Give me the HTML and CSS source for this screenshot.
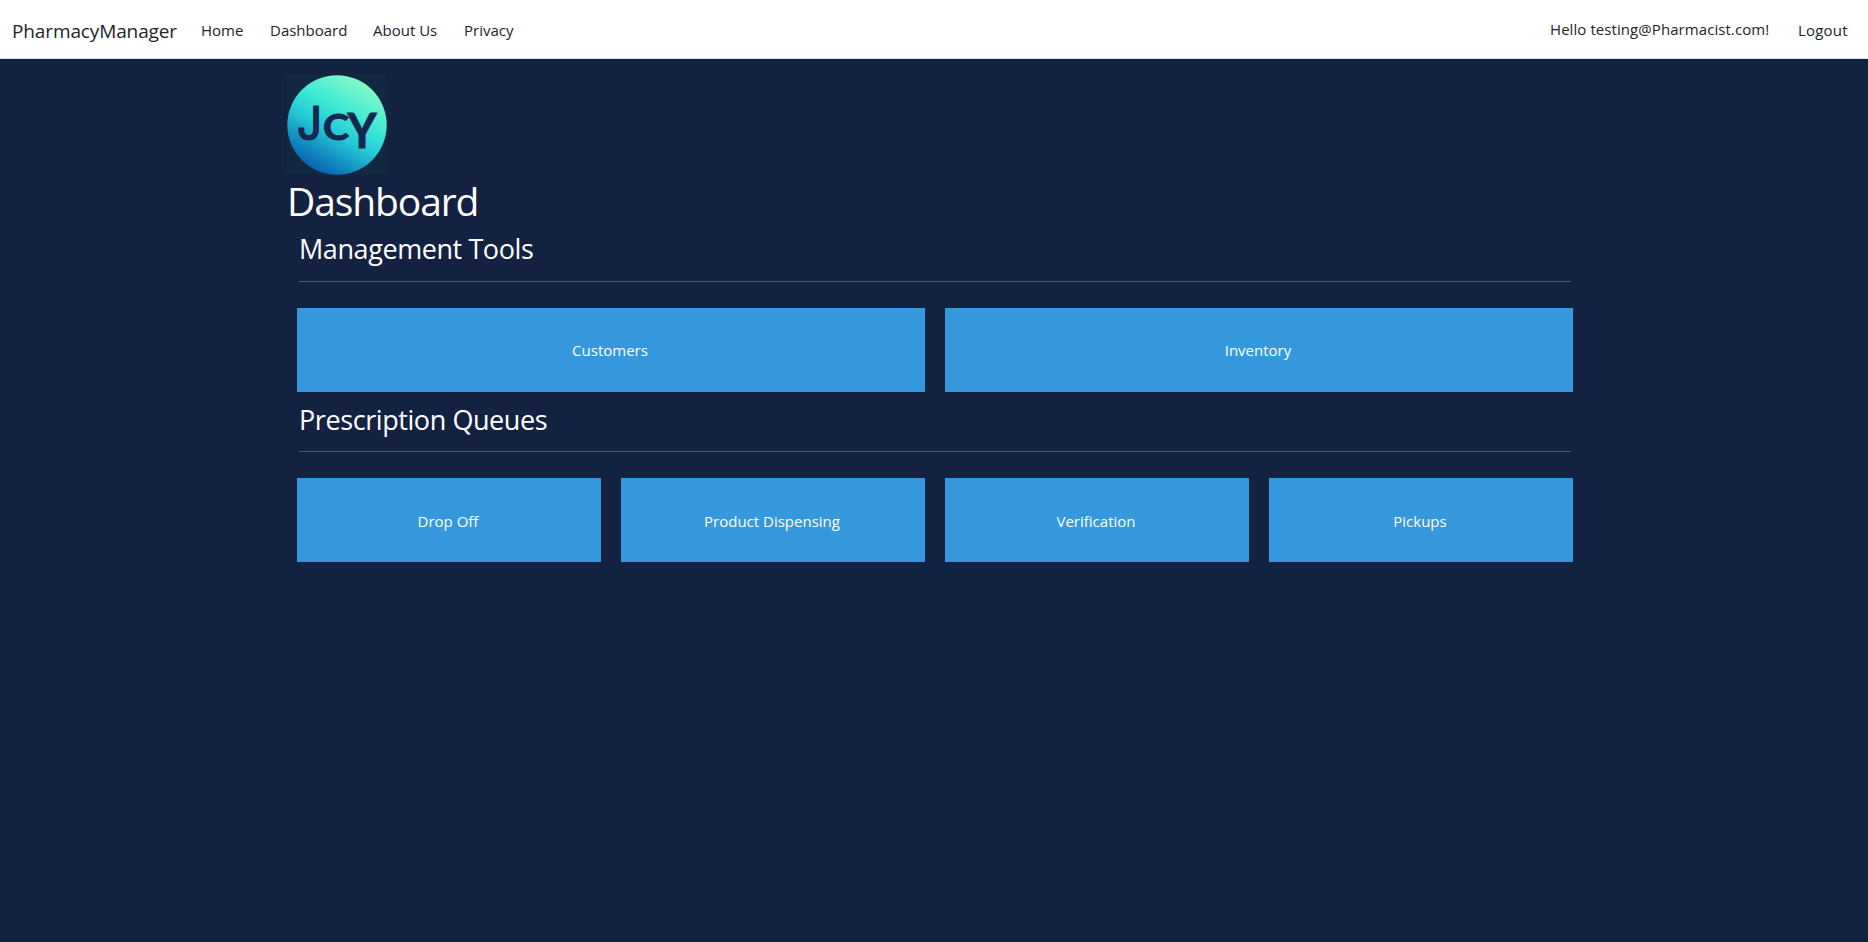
FILE: index.html
```html
<!DOCTYPE html>
<html lang="en">
<head>
<meta charset="utf-8">
<title>Dashboard - PharmacyManager</title>
<link rel="stylesheet" href="styles.css">
</head>
<body>
<header class="navbar">
  <a class="brand">PharmacyManager</a>
  <nav class="links">
    <a class="home">Home</a>
    <a class="dash">Dashboard</a>
    <a class="about">About Us</a>
    <a class="privacy">Privacy</a>
  </nav>
  <div class="account">
    <span class="hello">Hello testing@Pharmacist.com!</span>
    <a class="logout">Logout</a>
  </div>
</header>
<main class="container">
  <svg class="logo" viewBox="0 0 100 100" role="img" aria-label="JCY logo">
    <defs>
      <linearGradient id="disc" x1="0.24" y1="0.94" x2="0.74" y2="0.06">
        <stop offset="0" stop-color="#0860ae"/>
        <stop offset="0.2" stop-color="#1490c4"/>
        <stop offset="0.42" stop-color="#25c8d6"/>
        <stop offset="0.65" stop-color="#3ce8d5"/>
        <stop offset="1" stop-color="#83fac8"/>
      </linearGradient>
    </defs>
    <rect width="100" height="100" fill="#122840"/>
    <circle cx="50" cy="50" r="49.7" fill="url(#disc)"/>
    <g class="logo-text">
      <text class="logo-j" x="10" y="64.5" font-size="46" textLength="25" lengthAdjust="spacingAndGlyphs">J</text>
      <text x="36" y="64.5" font-size="36" textLength="26" lengthAdjust="spacingAndGlyphs">C</text>
      <text x="60.5" y="72.5" font-size="48" textLength="29" lengthAdjust="spacingAndGlyphs">Y</text>
    </g>
  </svg>
  <h1>Dashboard</h1>
  <section class="tools">
    <h2>Management Tools</h2>
    <hr>
    <div class="tiles two">
      <a class="tile">Customers</a>
      <a class="tile">Inventory</a>
    </div>
  </section>
  <section class="queues">
    <h2>Prescription Queues</h2>
    <hr>
    <div class="tiles four">
      <a class="tile">Drop Off</a>
      <a class="tile">Product Dispensing</a>
      <a class="tile">Verification</a>
      <a class="tile">Pickups</a>
    </div>
  </section>
</main>
</body>
</html>
```

FILE: styles.css
```css
* { box-sizing: border-box; }
body {
  margin: 0;
  min-height: 942px;
  background: #142241;
  color: #fff;
  font-family: "Open Sans", "Noto Sans", sans-serif;
  font-size: 15px;
  line-height: 24px;
  letter-spacing: 0;
}
.navbar {
  display: flex;
  align-items: center;
  height: 59px;
  padding: 0 19px 0 12px;
  background: #fff;
  border-bottom: 1px solid #dee2e6;
  color: #212529;
  white-space: nowrap;
}
.brand {
  width: 189px;
  font-size: 19px;
  letter-spacing: -0.12px;
  padding-top: 3px;
}
.links { display: flex; padding-top: 2px; letter-spacing: 0; }
.home { width: 69px; }
.dash { width: 103px; }
.about { width: 91px; }
.account { display: flex; margin-left: auto; letter-spacing: 0.07px; }
.hello { width: 248px; padding-top: 1px; }
.logout { width: 51px; padding-top: 2px; letter-spacing: 0.2px; }
.container {
  width: 1298px;
  margin: 0 auto;
  padding: 16px 0 0 2px;
}
.logo { display: block; width: 100px; height: 100px; }
.logo-text {
  font-family: Lato, sans-serif;
  font-weight: 700;
  fill: #16284f;
  stroke: #16284f;
  stroke-width: 1;
  stroke-linejoin: round;
}
.logo-j {
  font-family: Inter, sans-serif;
  font-weight: 500;
}
h1, h2 { margin: 0; font-weight: 400; }
h1 {
  font-size: 39px;
  line-height: 48px;
  letter-spacing: -1.1px;
  padding-top: 2px;
}
section { padding: 0 10px; }
.tools { padding-top: 7px; }
h2 {
  padding-left: 2px;
  font-size: 27px;
  line-height: 34px;
  letter-spacing: -0.42px;
}
hr {
  height: 1px;
  margin: 15px 2px 26px;
  border: 0;
  background: #4f596c;
}
.queues { padding-top: 11px; }
.queues hr { margin-top: 14px; }
.tiles { display: grid; gap: 20px; }
.two { grid-template-columns: repeat(2, 1fr); }
.four { grid-template-columns: repeat(4, 1fr); }
.tile {
  display: flex;
  align-items: center;
  justify-content: center;
  height: 84px;
  padding-right: 2px;
  background: #3598dc;
}
.four .tile { padding-top: 2px; }
```
